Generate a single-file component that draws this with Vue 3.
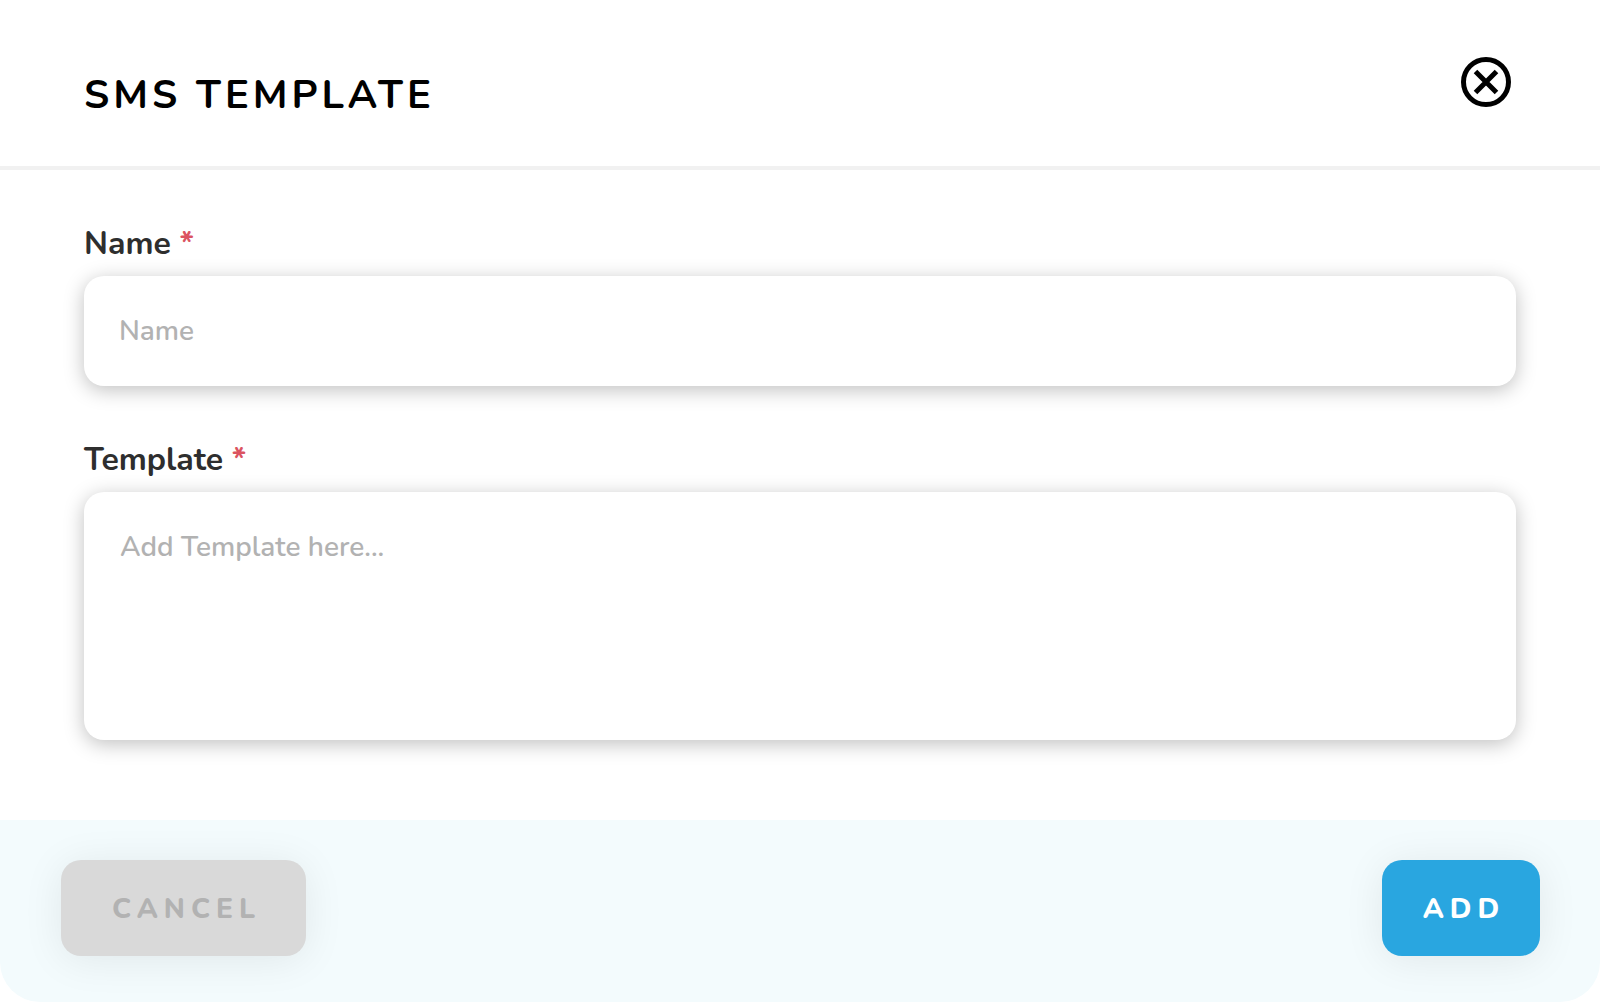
<script setup>
import { ref } from 'vue'

const name = ref('')
const template = ref('')
</script>

<template>
  <form class="dialog" @submit.prevent>
    <header class="header">
      <h1 class="title">SMS TEMPLATE</h1>
      <button class="close" type="button" aria-label="Close">
        <svg viewBox="0 0 50 50" width="50" height="50" fill="none" stroke="currentColor" stroke-width="5">
          <circle cx="25" cy="25" r="22.5" />
          <path d="M14.5 14.5 35.5 35.5M35.5 14.5 14.5 35.5" />
        </svg>
      </button>
    </header>

    <main class="body">
      <div class="field">
        <label class="label" for="name">Name <span class="required">*</span></label>
        <input id="name" v-model="name" class="control" type="text" placeholder="Name" />
      </div>
      <div class="field">
        <label class="label" for="template">Template <span class="required">*</span></label>
        <textarea id="template" v-model="template" class="control area" placeholder="Add Template here..."></textarea>
      </div>
    </main>

    <footer class="footer">
      <button class="button cancel" type="button">CANCEL</button>
      <button class="button add" type="submit">ADD</button>
    </footer>
  </form>
</template>

<style>
body {
  background: #fff;
}
</style>

<style scoped>
.dialog,
.dialog * {
  box-sizing: border-box;
}

.dialog {
  font-family: Nunito, Lato, sans-serif;
  background: #fff;
}

.header {
  display: flex;
  justify-content: space-between;
  align-items: flex-start;
  padding: 57px 89px 45px 84px;
  border-bottom: 4px solid #f1f1f1;
}

.title {
  margin: 12px 0 0;
  font-size: 40px;
  line-height: 52px;
  font-weight: 700;
  letter-spacing: 4px;
  color: #000;
}

.close {
  display: flex;
  padding: 0;
  border: 0;
  background: none;
  color: #000;
  cursor: pointer;
}

.body {
  display: flex;
  flex-direction: column;
  gap: 52px;
  padding: 52px 84px 80px;
}

.field {
  display: flex;
  flex-direction: column;
  gap: 10px;
}

.label {
  font-size: 32px;
  line-height: 44px;
  font-weight: 700;
  color: #2e2e2e;
}

.required {
  color: #db5461;
}

.control {
  display: block;
  width: 100%;
  height: 110px;
  padding: 0 35px;
  border: 0;
  border-radius: 20px;
  outline: 0;
  background: #fff;
  box-shadow: 0 4px 20px rgba(0, 0, 0, 0.25);
  font-family: inherit;
  font-size: 28px;
  font-weight: 600;
  line-height: 40px;
  color: #2e2e2e;
}

.control::placeholder {
  color: #b2b2b2;
  opacity: 1;
}

.area {
  height: 248px;
  padding: 35px 36px;
  resize: none;
}

.footer {
  display: flex;
  justify-content: space-between;
  padding: 40px 60px 46px 61px;
  border-radius: 0 0 40px 40px;
  background: #f3fbfd;
}

.button {
  height: 96px;
  padding: 2px 0 0 6px;
  border: 0;
  border-radius: 20px;
  box-shadow: 0 4px 40px rgba(0, 0, 0, 0.08);
  font-family: inherit;
  font-size: 28px;
  font-weight: 800;
  letter-spacing: 6px;
  cursor: pointer;
}

.cancel {
  min-width: 245px;
  background: #d9d9d9;
  color: #b2b2b2;
}

.add {
  min-width: 158px;
  background: #29a6e0;
  color: #fff;
}
</style>
